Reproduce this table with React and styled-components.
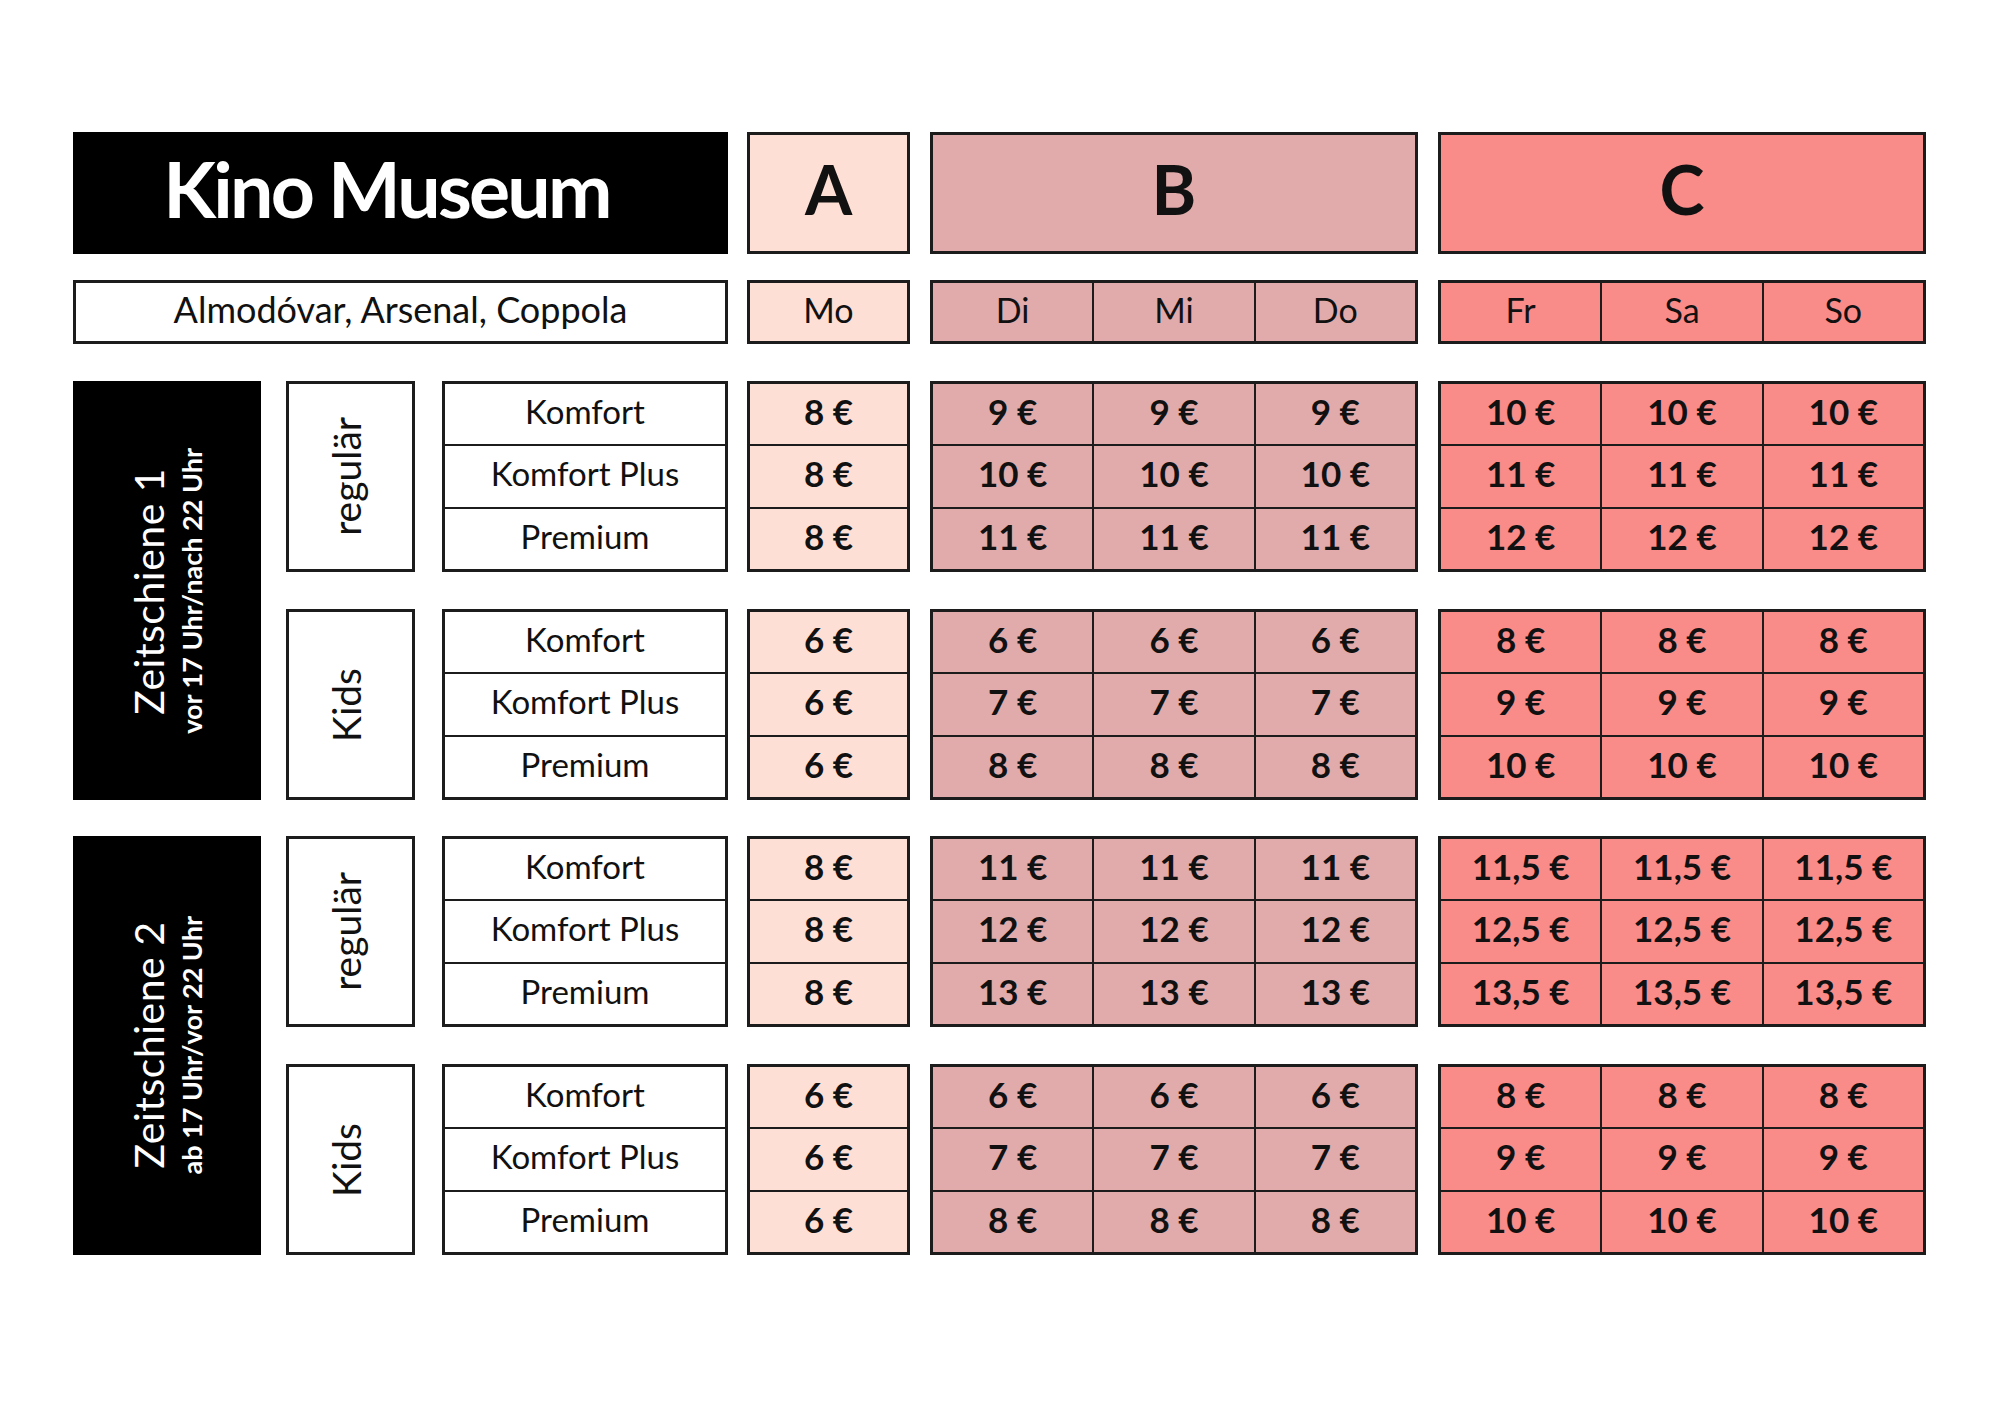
import React from 'react';
import styled, { createGlobalStyle } from 'styled-components';

const FONT = `"Lato", "Liberation Sans", sans-serif`;
const LINE = '#1c1c1c';
const ZONE = { A: '#FDDFD5', B: '#E1ABAB', C: '#F98B89' };

const GlobalStyle = createGlobalStyle`
  html, body { margin: 0; padding: 0; background: #fff; }
  body { font-family: ${FONT}; color: #111; }
  * { box-sizing: border-box; }
`;

const Page = styled.div`
  width: 2000px;
  height: 1409px;
  padding: 132px 0 0 73px;
  display: flex;
  flex-direction: column;
`;

const HeadRow = styled.div`
  display: flex;
  align-items: stretch;
  height: ${(p) => p.$h}px;
  margin-top: ${(p) => p.$mt || 0}px;
`;

const TitleBox = styled.div`
  width: 655px;
  margin-right: 19px;
  background: #000;
  color: #fff;
  display: flex;
  align-items: center;
  justify-content: center;
  font-weight: 700;
  font-size: 77px;
  letter-spacing: -2.8px;
  padding: 0 28px 10px 0;
`;

const SubtitleBox = styled.div`
  width: 655px;
  margin-right: 19px;
  border: 3px solid ${LINE};
  display: flex;
  align-items: center;
  justify-content: center;
  font-size: 36px;
  padding-bottom: 6px;
`;

const Zones = styled.div`
  display: flex;
  gap: 20px;
`;

const Grid = styled.div`
  width: ${(p) => p.$w}px;
  height: 100%;
  border: 3px solid ${LINE};
  background: ${LINE};
  display: grid;
  grid-template-columns: repeat(${(p) => p.$cols}, 1fr);
  grid-template-rows: repeat(${(p) => p.$rows}, 1fr);
  gap: 2px;
  margin-right: ${(p) => p.$mr || 0}px;
`;

const Cell = styled.div`
  background: ${(p) => p.$bg};
  display: flex;
  align-items: center;
  justify-content: center;
  font-size: ${(p) => p.$size}px;
  font-weight: ${(p) => p.$weight || 400};
  padding-bottom: ${(p) => p.$pb ?? 6}px;
  white-space: nowrap;
`;

const Section = styled.div`
  display: flex;
  gap: 25px;
  margin-top: ${(p) => p.$mt}px;
`;

const ZeitBox = styled.div`
  width: 188px;
  background: #000;
  color: #fff;
  display: flex;
  align-items: center;
  justify-content: center;
`;

const Vertical = styled.div`
  writing-mode: vertical-rl;
  transform: rotate(180deg);
  text-align: center;
  display: flex;
  flex-direction: column;
  align-items: center;
`;

const ZeitTitle = styled.span`
  font-size: 41px;
  font-weight: 400;
  letter-spacing: 0.5px;
  line-height: 1.05;
`;

const ZeitSub = styled.span`
  font-size: 27px;
  font-weight: 700;
  line-height: 1.05;
  margin-block-start: 8px;
`;

const Groups = styled.div`
  display: flex;
  flex-direction: column;
  gap: 37px;
`;

const GroupRow = styled.div`
  display: flex;
  align-items: stretch;
  height: 191px;
`;

const CategoryBox = styled.div`
  width: 129px;
  margin-right: 27px;
  border: 3px solid ${LINE};
  display: flex;
  align-items: center;
  justify-content: center;
  padding-right: 8px;
`;

const CategoryText = styled.span`
  writing-mode: vertical-rl;
  transform: rotate(180deg);
  font-size: 39px;
  line-height: 1;
`;

const ZoneHead = ({ zone, w }) => (
  <Grid $w={w} $cols={1} $rows={1}>
    <Cell $bg={ZONE[zone]} $size={68} $weight={700} $pb={10}>{zone}</Cell>
  </Grid>
);

const DayRow = ({ zone, w, days }) => (
  <Grid $w={w} $cols={days.length} $rows={1}>
    {days.map((d) => (
      <Cell key={d} $bg={ZONE[zone]} $size={34}>{d}</Cell>
    ))}
  </Grid>
);

const PriceTable = ({ zone, w, rows }) => (
  <Grid $w={w} $cols={rows[0].length} $rows={rows.length}>
    {rows.flat().map((v, i) => (
      <Cell key={i} $bg={ZONE[zone]} $size={35} $weight={700}>{v} €</Cell>
    ))}
  </Grid>
);

const rep = (vals) => vals.map((v) => [v, v, v]);

const sections = [
  {
    title: 'Zeitschiene 1',
    sub: 'vor 17 Uhr/nach 22 Uhr',
    groups: [
      { cat: 'regulär', A: [8, 8, 8], B: [9, 10, 11], C: [10, 11, 12] },
      { cat: 'Kids', A: [6, 6, 6], B: [6, 7, 8], C: [8, 9, 10] },
    ],
  },
  {
    title: 'Zeitschiene 2',
    sub: 'ab 17 Uhr/vor 22 Uhr',
    groups: [
      { cat: 'regulär', A: [8, 8, 8], B: [11, 12, 13], C: ['11,5', '12,5', '13,5'] },
      { cat: 'Kids', A: [6, 6, 6], B: [6, 7, 8], C: [8, 9, 10] },
    ],
  },
];

const LABELS = ['Komfort', 'Komfort Plus', 'Premium'];

export default function App() {
  return (
    <>
      <GlobalStyle />
      <Page>
        <HeadRow $h={122}>
          <TitleBox>Kino Museum</TitleBox>
          <Zones>
            <ZoneHead zone="A" w={163} />
            <ZoneHead zone="B" w={488} />
            <ZoneHead zone="C" w={488} />
          </Zones>
        </HeadRow>
        <HeadRow $h={64} $mt={26}>
          <SubtitleBox>Almodóvar, Arsenal, Coppola</SubtitleBox>
          <Zones>
            <DayRow zone="A" w={163} days={['Mo']} />
            <DayRow zone="B" w={488} days={['Di', 'Mi', 'Do']} />
            <DayRow zone="C" w={488} days={['Fr', 'Sa', 'So']} />
          </Zones>
        </HeadRow>
        {sections.map((s, si) => (
          <Section key={s.title} $mt={si === 0 ? 37 : 36}>
            <ZeitBox>
              <Vertical>
                <ZeitTitle>{s.title}</ZeitTitle>
                <ZeitSub>{s.sub}</ZeitSub>
              </Vertical>
            </ZeitBox>
            <Groups>
              {s.groups.map((g) => (
                <GroupRow key={g.cat}>
                  <CategoryBox>
                    <CategoryText>{g.cat}</CategoryText>
                  </CategoryBox>
                  <Grid $w={286} $cols={1} $rows={3} $mr={19}>
                    {LABELS.map((l) => (
                      <Cell key={l} $bg="#fff" $size={33}>{l}</Cell>
                    ))}
                  </Grid>
                  <Zones>
                    <PriceTable zone="A" w={163} rows={g.A.map((v) => [v])} />
                    <PriceTable zone="B" w={488} rows={rep(g.B)} />
                    <PriceTable zone="C" w={488} rows={rep(g.C)} />
                  </Zones>
                </GroupRow>
              ))}
            </Groups>
          </Section>
        ))}
      </Page>
    </>
  );
}
